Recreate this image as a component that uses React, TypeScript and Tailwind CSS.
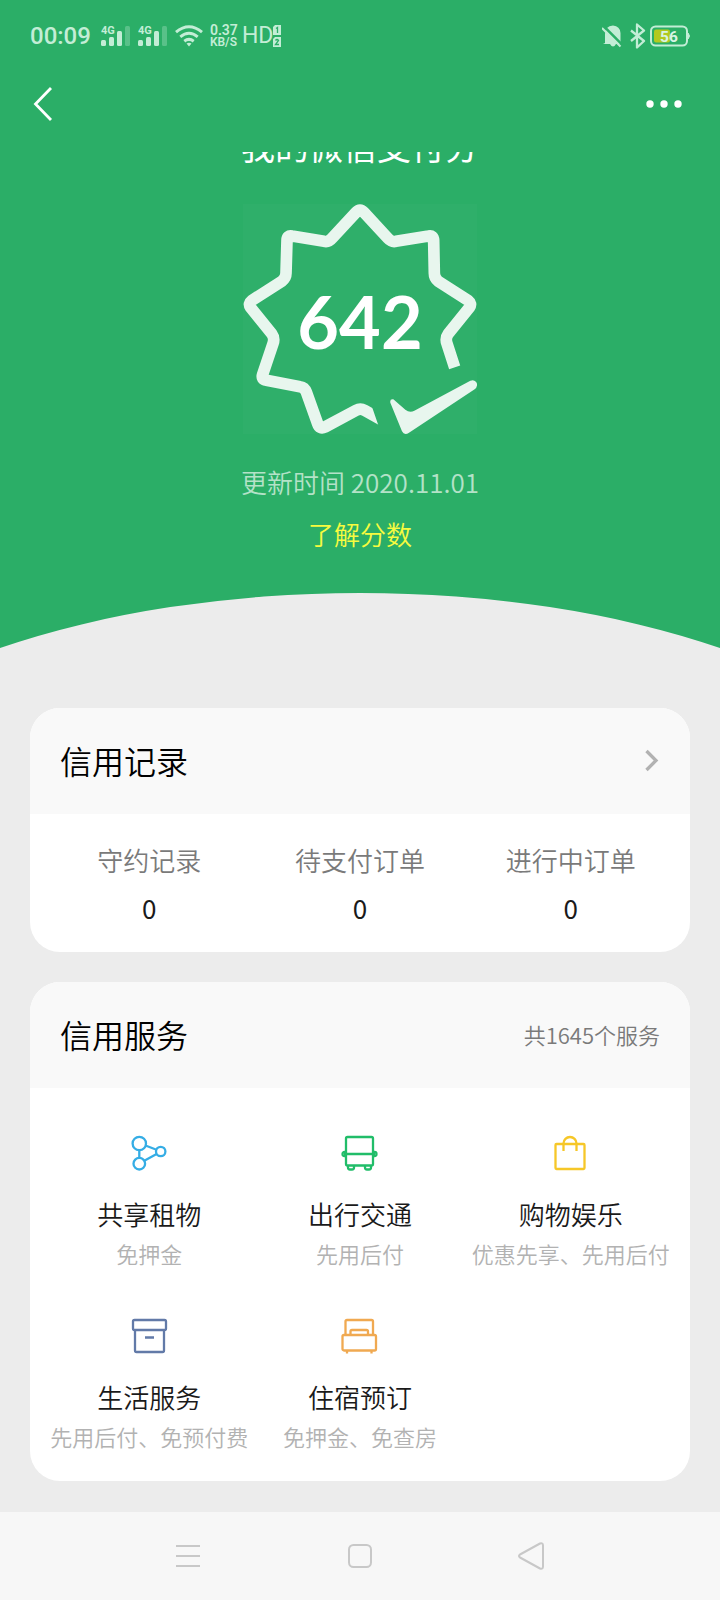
import type { ReactNode } from 'react';

function Signal() {
  return (
    <svg width="30" height="22" viewBox="0 0 30 22" fill="#c3edd6" aria-hidden="true">
      <rect x="0" y="15" width="5" height="6" rx="1.5" />
      <rect x="8" y="12" width="5" height="9" rx="1.5" />
      <rect x="16" y="6" width="5" height="15" rx="1.5" />
      <rect x="24" y="1" width="5" height="20" rx="1.5" opacity=".3" />
      <text x="0" y="9" fontSize="11" fontWeight="700" fontFamily="Roboto, sans-serif">
        4G
      </text>
    </svg>
  );
}

function StatusBar() {
  return (
    <div className="flex h-[72px] items-center justify-between px-[30px] font-['Roboto',sans-serif] text-[#c3edd6]">
      <div className="flex items-center">
        <span className="text-2xl leading-6 font-medium">00:09</span>
        <div className="ml-2.5 flex gap-[7px]">
          <Signal />
          <Signal />
        </div>
        <svg className="ml-[7px]" width="28" height="22" viewBox="0 0 28 22" fill="none" stroke="#c3edd6" strokeWidth="3" aria-hidden="true">
          <path d="M1 7.2Q14-3.6 27 7.2" />
          <path d="M5.3 11.8Q14 4.8 22.7 11.8" />
          <path d="M9.3 16.2Q14 12.6 18.7 16.2" />
          <path d="M11.500 18.600Q14 17 16.500 18.600L14 21.500Z" fill="#c3edd6" stroke="none" />
        </svg>
        <div className="ml-[7px] flex flex-col font-semibold">
          <span className="text-sm leading-3">0.37</span>
          <span className="text-xs leading-3">KB/S</span>
        </div>
        <span className="ml-1 text-[23px] leading-6">HD</span>
        <svg width="9" height="24" viewBox="0 0 9 24" fill="#c3edd6" aria-hidden="true">
          <path d="M2 1h6v10H0V3zM2 13h6v10H0v-8z" />
          <path d="M3 4.500L4.500 3.500V9M2.500 16.500Q4 14.500 5.500 16.500L2.500 20.500H6" fill="none" stroke="#2bae67" strokeWidth="1.300" />
        </svg>
      </div>
      <div className="flex items-center gap-2">
        <svg width="20" height="24" viewBox="0 0 20 24" aria-hidden="true">
          <path d="M3 19V10Q3 2 11 1.500Q18 2 18.500 9V18L19 20H14Q11 25 8 20H1Z" fill="#c3edd6" />
          <path d="M1.500 2L20 20.500" stroke="#2bae67" strokeWidth="2.500" />
          <path d="M0 4L18.500 22.500" stroke="#c3edd6" strokeWidth="2" />
        </svg>
        <svg width="16" height="26" viewBox="0 0 16 26" fill="none" stroke="#c3edd6" strokeWidth="2.300" strokeLinejoin="round" aria-hidden="true">
          <path d="M1 7.500L14 18L7 24.500V1.500L14 7.500L1 18" />
        </svg>
        <svg className="-ml-1" width="40" height="22" viewBox="0 0 40 22" aria-hidden="true">
          <rect x="1" y="1.500" width="36" height="19" rx="4.500" fill="none" stroke="#c3edd6" strokeWidth="2" />
          <path d="M38 8q3 3 0 6z" fill="#c3edd6" stroke="#c3edd6" />
          <rect x="4" y="4.500" width="16" height="13" rx="2" fill="#b3c91f" />
          <text x="19" y="17" textAnchor="middle" fill="#d9f4e4" fontSize="15.500" fontWeight="700" fontFamily="Roboto, sans-serif">
            56
          </text>
        </svg>
      </div>
    </div>
  );
}

function ScoreBadge() {
  return (
    <div className="relative mt-[34px] flex h-[230px] w-[234px] items-center justify-center bg-[#2faf6a] pt-1">
      <svg className="absolute inset-0 h-full w-full" viewBox="68 191 702 690" aria-hidden="true">
        <clipPath id="badge-cut">
          <path d="M0 100H900V700L650 720L450 785L474 855L490 900H0Z" />
        </clipPath>
        <path
          clipPath="url(#badge-cut)"
          d="M703 681L680 610Q674 594 684 580L747 502Q756 490 743 480L654 423Q642 414 642 399L640 300Q639 284 625 287L527 303Q514 306 503 294L430 215Q419 203 408 215L335 294Q325 306 311 303L215 287Q200 284 200 300L197 399Q197 414 184 423L95 480Q82 490 91 502L154 580Q164 594 158 610L127 702Q122 718 138 720L239 739Q253 741 258 755L292 850Q298 868 314 860L407 810Q420 803 433 810L495 845"
          fill="none"
          stroke="#e8f6ee"
          strokeWidth="35"
          strokeLinejoin="round"
        />
        <path
          d="M510 787Q508 775 519 777L555 808Q568 818 582 811L750 721Q763 716 769 727Q773 739 763 747L566 877Q552 886 545 873Z"
          fill="#e8f6ee"
        />
      </svg>
      <strong className="relative font-['Lato',sans-serif] text-[72px] leading-[72px] font-bold text-white">642</strong>
    </div>
  );
}

function Card({ title, aside, children }: { title: string; aside: ReactNode; children: ReactNode }) {
  return (
    <section className="overflow-hidden rounded-[30px] bg-white">
      <header className="flex h-[106px] items-center justify-between bg-[#f9f9f9] px-[30px] pb-0.5">
        <h2 className="text-[32px] leading-10 font-[350] text-black">{title}</h2>
        {aside}
      </header>
      {children}
    </section>
  );
}

const records = [
  { label: '守约记录', value: 0 },
  { label: '待支付订单', value: 0 },
  { label: '进行中订单', value: 0 },
];

const services = [
  {
    name: '共享租物',
    note: '免押金',
    color: 'text-[#35ade5]',
    icon: (
      <>
        <circle cx="8.300" cy="8.500" r="6.700" />
        <circle cx="8.300" cy="28.700" r="5.800" />
        <circle cx="29.700" cy="16.500" r="4.700" />
        <path d="M8.300 15v8M14.500 10.500l11 4.200M13.300 25.700l12.300-6.800" />
      </>
    ),
  },
  {
    name: '出行交通',
    note: '先用后付',
    color: 'text-[#21bd69]',
    icon: (
      <>
        <rect x="5" y="2" width="27" height="28.500" rx="1.500" />
        <path d="M3 19h31M5 17H3.500a2 2 0 0 0 0 4H5M32 17h1.500a2 2 0 0 1 0 4H32" />
        <path d="M7 31v1.500q0 2 2 2h2q2 0 2-2V31M24 31v1.500q0 2 2 2h2q2 0 2-2V31" />
      </>
    ),
  },
  {
    name: '购物娱乐',
    note: '优惠先享、先用后付',
    color: 'text-[#f6c728]',
    icon: (
      <>
        <rect x="3.500" y="9" width="29" height="25" rx="1" />
        <path d="M11.500 16V8.500a6.500 6.500 0 0 1 13 0V16" />
      </>
    ),
  },
  {
    name: '生活服务',
    note: '先用后付、免预付费',
    color: 'text-[#627aa8]',
    icon: (
      <>
        <rect x="2" y="2" width="33" height="10" rx="1.500" />
        <path d="M4 12v20.500q0 1.500 1.500 1.500h26q1.500 0 1.500-1.500V12M14 19.500h9" />
      </>
    ),
  },
  {
    name: '住宿预订',
    note: '免押金、免查房',
    color: 'text-[#f0a951]',
    icon: (
      <>
        <path d="M4.500 17V3.500Q4.500 2 6 2h24.500Q32 2 32 3.500V17" />
        <path d="M9.500 17v-3.500q0-1.500 1.500-1.500h14.500q1.500 0 1.500 1.500V17" />
        <rect x="1.500" y="17" width="33.500" height="15.500" rx="1.500" />
        <path d="M6 33v2.500M30.500 33v2.500" />
      </>
    ),
  },
];

export default function App() {
  return (
    <div className="flex min-h-screen flex-col bg-[#ececec] font-['Noto_Sans_CJK_SC',sans-serif]">
      <header className="bg-[#2bae67]">
        <StatusBar />
        <nav className="flex h-20 items-start justify-between px-[30px] pt-3">
          <button type="button" aria-label="返回" className="flex h-10 items-center">
            <svg width="26" height="36" viewBox="0 0 26 36" fill="none" stroke="white" strokeWidth="2.800">
              <path d="M21 2L5.500 18L21 34" />
            </svg>
          </button>
          <button type="button" aria-label="更多" className="flex h-10 items-center">
            <svg width="52" height="10" viewBox="0 0 52 10" fill="white">
              <circle cx="12" cy="5" r="3.700" />
              <circle cx="26" cy="5" r="3.700" />
              <circle cx="40" cy="5" r="3.700" />
            </svg>
          </button>
        </nav>
      </header>

      <main className="flex-1">
        <div className="flex flex-col items-center overflow-hidden bg-[#2bae67] pb-[39px]">
          <h1 className="-mt-[30px] text-[34px] leading-[48px] font-normal text-white">我的微信支付分</h1>
          <ScoreBadge />
          <p className="mt-7 text-[26px] leading-10 font-[350] text-[#b4e2c8]">更新时间 2020.11.01</p>
          <a href="#score" className="mt-3 text-[26px] leading-10 font-[350] text-[#f7fb3f]">
            了解分数
          </a>
        </div>
        <svg className="block h-[55px] w-full" viewBox="0 0 720 55" preserveAspectRatio="none" aria-hidden="true">
          <path d="M0 0H720V55A600 275 0 0 0 0 55Z" fill="#2bae67" />
        </svg>

        <div className="flex flex-col gap-[30px] px-[30px] pt-[60px] pb-[30px]">
          <Card
            title="信用记录"
            aside={
              <a href="#records" aria-label="查看信用记录">
                <svg width="16" height="24" viewBox="0 0 16 24" fill="none" stroke="#b2b2b2" strokeWidth="3.300">
                  <path d="M2.500 3L12 12.500L2.500 22" />
                </svg>
              </a>
            }
          >
            <dl className="grid h-[138px] grid-cols-3 px-3.5 pt-[26px] text-center">
              {records.map((r) => (
                <div key={r.label}>
                  <dt className="text-[26px] leading-10 font-[350] text-[#7a7a7a]">{r.label}</dt>
                  <dd className="mt-2 text-[26px] leading-10 font-normal text-[#1a1a1a]">{r.value}</dd>
                </div>
              ))}
            </dl>
          </Card>

          <Card title="信用服务" aside={<span className="text-[22px] leading-8 font-[350] text-[#7a7a7a]">共1645个服务</span>}>
            <ul className="grid grid-cols-3 gap-y-[49px] px-3.5 pt-[47px] pb-[29px] text-center">
              {services.map((s) => (
                <li key={s.name}>
                  <a href="#service" className="flex flex-col items-center whitespace-nowrap">
                    <svg
                      className={s.color}
                      width="37"
                      height="37"
                      viewBox="0 0 37 37"
                      fill="none"
                      stroke="currentColor"
                      strokeWidth="2.300"
                      aria-hidden="true"
                    >
                      {s.icon}
                    </svg>
                    <span className="mt-[22px] text-[26px] leading-10 font-[350] text-[#1a1a1a]">{s.name}</span>
                    <span className="mt-[3px] text-[22px] leading-8 font-[350] text-[#b2b2b2]">{s.note}</span>
                  </a>
                </li>
              ))}
            </ul>
          </Card>
        </div>
      </main>

      <footer className="flex h-[88px] items-center justify-center gap-[142px] bg-[#f7f7f7] text-[#c8c8c8]">
        <button type="button" aria-label="最近任务">
          <svg width="30" height="30" viewBox="0 0 30 30" stroke="currentColor" strokeWidth="2">
            <path d="M3 5h24M3 15h24M3 25h24" />
          </svg>
        </button>
        <button type="button" aria-label="主屏幕">
          <svg width="30" height="30" viewBox="0 0 30 30" fill="none" stroke="currentColor" strokeWidth="2">
            <rect x="4" y="4" width="22" height="22" rx="4.500" />
          </svg>
        </button>
        <button type="button" aria-label="返回上一页">
          <svg width="30" height="30" viewBox="0 0 30 30" fill="none" stroke="currentColor" strokeWidth="2" strokeLinejoin="round">
            <path d="M3 13.500L23 2.500Q26 1.500 26 4.500V25.500Q26 28.500 23 27.500L3 16.500Q1 15 3 13.500Z" />
          </svg>
        </button>
      </footer>
    </div>
  );
}
